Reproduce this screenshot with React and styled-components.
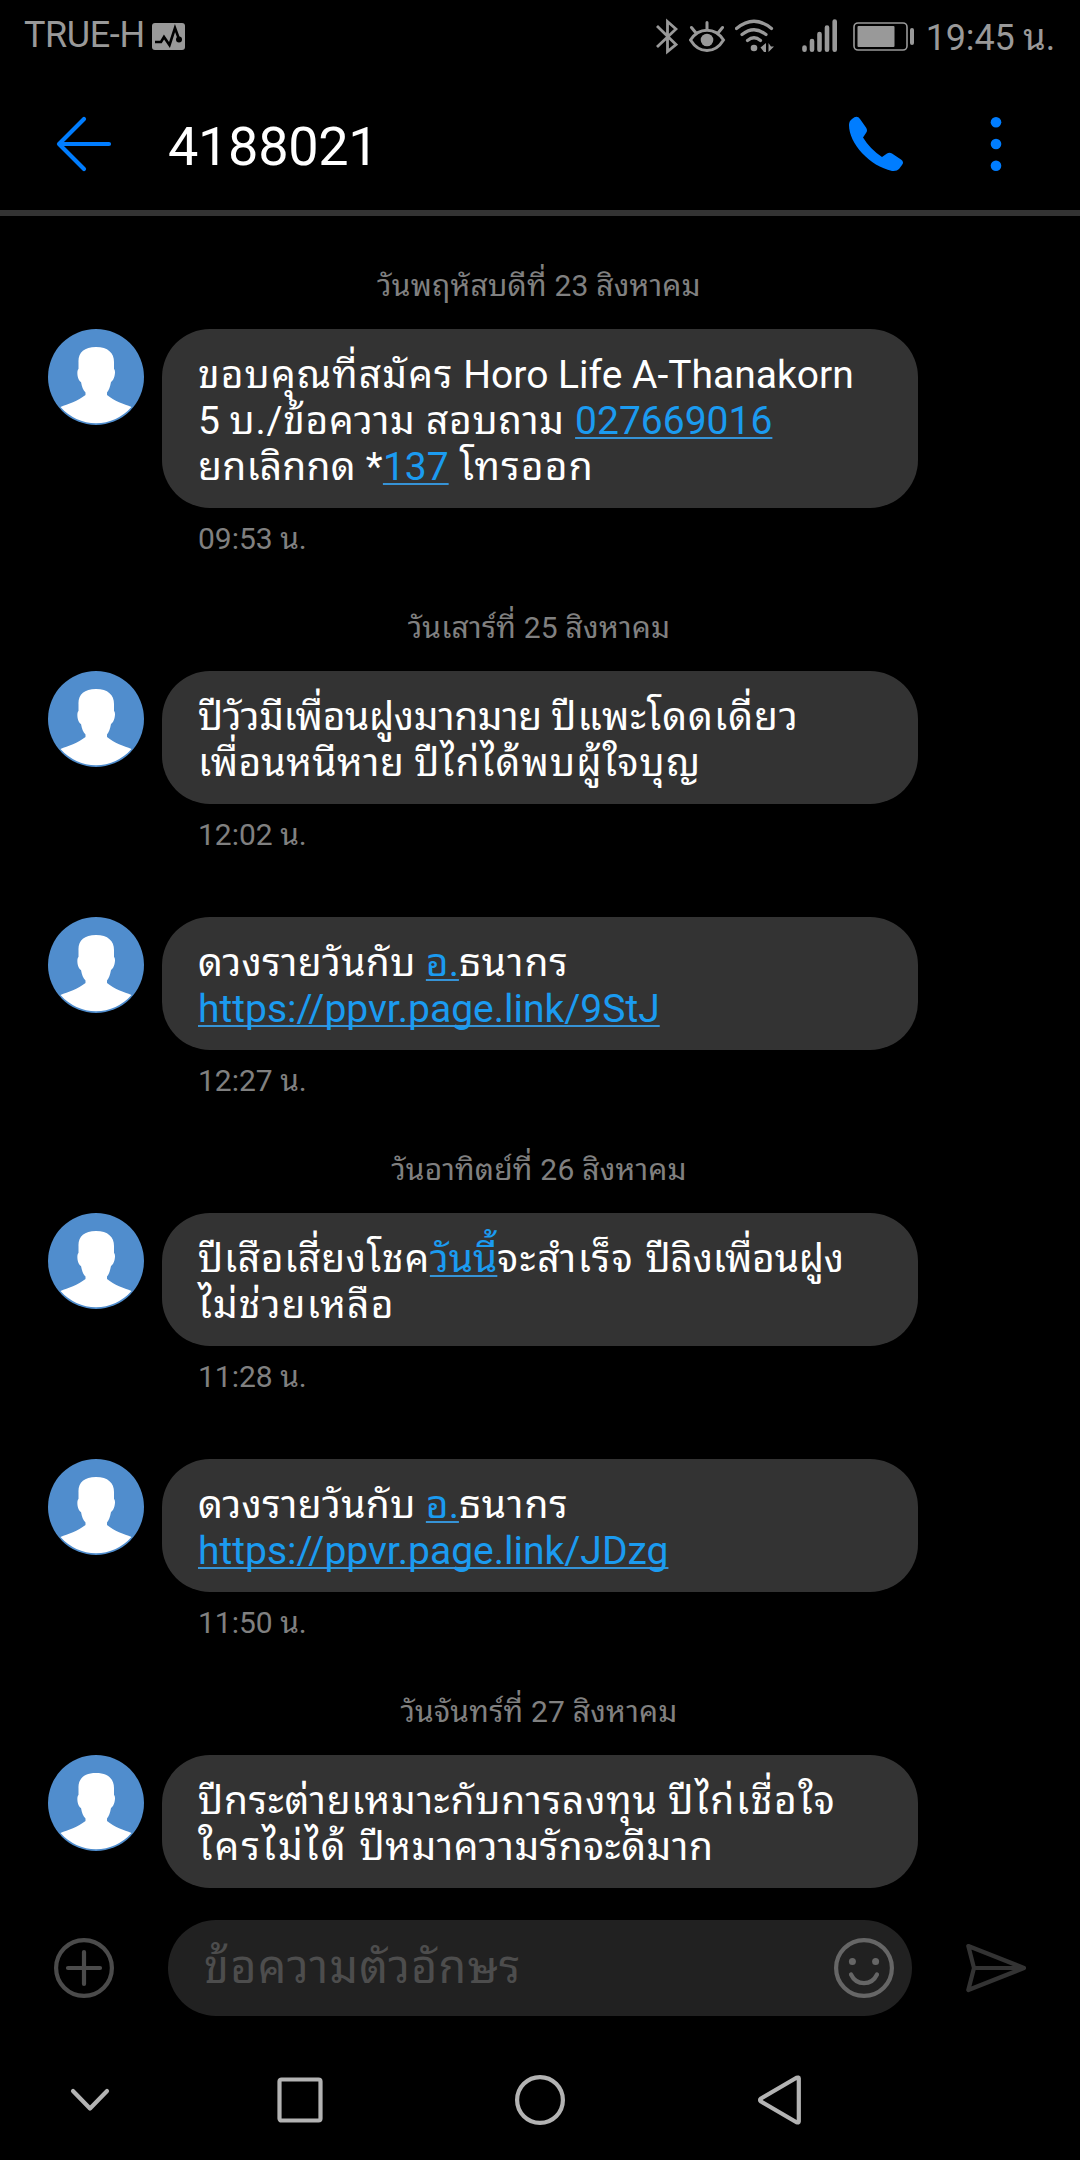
import styled, { createGlobalStyle } from "styled-components";

const GlobalStyle = createGlobalStyle`
  * {
    box-sizing: border-box;
  }
  body {
    margin: 0;
    background: #000;
  }
`;

const Screen = styled.div`
  width: 1080px;
  height: 2160px;
  overflow: hidden;
  display: flex;
  flex-direction: column;
  background: #000;
  color: #fff;
  font-family: Roboto, "Noto Sans Thai Looped", "Noto Sans Thai", sans-serif;
`;

const StatusBar = styled.div`
  height: 72px;
  flex: none;
  display: flex;
  justify-content: space-between;
  padding: 0 25px 0 24px;
  color: #999;
  font-size: 36px;
  line-height: 42px;
`;

const Carrier = styled.div`
  display: flex;
  padding-top: 14px;
  letter-spacing: -0.4px;
`;

const Badge = styled.svg`
  margin: 9px 0 0 7px;
`;

const StatusIcons = styled.div`
  display: flex;
  align-items: flex-start;
`;

const StatusIcon = styled.svg`
  flex: none;
  margin-right: ${(props) => props.$gap}px;
`;

const Clock = styled.span`
  padding-top: 17px;
  letter-spacing: -0.15px;
  white-space: nowrap;
`;

const Header = styled.div`
  height: 144px;
  flex: none;
  display: flex;
  align-items: center;
  padding: 6px 54px 0;
  border-bottom: 6px solid #333;
  color: #007dff;
`;

const Title = styled.h1`
  flex: 1;
  margin: 4px 0 0 54px;
  color: #fff;
  font-size: 54px;
  font-weight: 400;
  letter-spacing: -0.3px;
`;

const Phone = styled.svg`
  margin-right: 60px;
`;

const Messages = styled.div`
  flex: 1;
  min-height: 0;
  overflow: hidden;
  padding: 53px 48px 0;
`;

const Entry = styled.div`
  padding-top: ${(props) => (props.$dated ? 0 : 10)}px;
`;

const DateLabel = styled.div`
  height: 60px;
  padding-right: 2px;
  color: #808080;
  font-size: 30px;
  line-height: 34px;
  letter-spacing: 0.22px;
  text-align: center;
  white-space: nowrap;
`;

const Message = styled.div`
  display: flex;
  align-items: flex-start;
  gap: 18px;
`;

const Body = styled.div`
  width: 756px;
`;

const Bubble = styled.div`
  border-radius: 48px;
  background: #333;
  padding: 23px 36px 18px;
  font-size: 39px;
  line-height: 46px;
`;

const Line = styled.div`
  height: 46px;
  white-space: pre;
`;

const Text = styled.span`
  letter-spacing: ${(props) => props.$track || 0}px;
`;

const Link = styled.a`
  color: #1b9bf0;
  text-decoration: underline #3693d6;
  text-decoration-thickness: 2px;
  text-decoration-skip-ink: none;
  text-underline-offset: 3px;
`;

const Time = styled.div`
  height: 103px;
  padding: 14px 36px 0;
  color: #808080;
  font-size: 30px;
  line-height: 34px;
`;

const Composer = styled.div`
  flex: none;
  height: 96px;
  display: flex;
  align-items: center;
  padding: 0 52px 0 54px;
`;

const Input = styled.div`
  flex: none;
  width: 744px;
  height: 96px;
  margin: 0 54px;
  padding: 0 18px 0 36px;
  border-radius: 48px;
  background: #212121;
  display: flex;
  align-items: center;
  justify-content: space-between;
`;

const Placeholder = styled.span`
  color: #4d4d4d;
  font-size: 45px;
  line-height: 50px;
  letter-spacing: 1.2px;
`;

const NavBar = styled.div`
  flex: none;
  height: 144px;
  display: flex;
  align-items: center;
  padding: 24px 0 0 60px;
`;

const NavIcon = styled.svg`
  width: 60px;
  height: 60px;
  fill: none;
  stroke: #b3b3b3;
  stroke-width: 4.2;
  stroke-linecap: round;
  stroke-linejoin: round;
  margin-right: ${(props) => props.$gap}px;
`;

const Avatar = () => (
  <svg width="96" height="96" viewBox="0 0 96 96">
    <circle cx="48" cy="48" r="48" fill="#508dcd" />
    <path
      fill="#fff"
      d="M48 18C36 18 30 24 30.500 33V40C28.500 41 29 51 33 53C34 58 35 61 37.500 63.500V66C30 72 20 75 12.500 78A47 47 0 0 0 83.500 78C76 75 66 72 59 66V63.500C61 61 62 58 63 53C67 51 68 41 66 40V33C66 24 60 18 48 18Z"
    />
  </svg>
);

// track is the letter spacing of a run of text, in px
const messages = [
  {
    date: "วันพฤหัสบดีที่ 23 สิงหาคม",
    lines: [
      [{ text: "ขอบคุณที่สมัคร", track: 1.1 }, { text: " Horo Life A-Thanakorn" }],
      [{ text: "5 " }, { text: "บ./ข้อความ สอบถาม ", track: 0.68 }, { text: "027669016", url: true }],
      [{ text: "ยกเลิกกด *", track: 0.22 }, { text: "137", url: true }, { text: " โทรออก", track: 1.2 }],
    ],
    time: "09:53 น.",
  },
  {
    date: "วันเสาร์ที่ 25 สิงหาคม",
    lines: [
      [{ text: "ปีวัวมีเพื่อนฝูงมากมาย ", track: -0.36 }, { text: "ปีแพะโดดเดี่ยว", track: 1 }],
      [{ text: "เพื่อนหนีหาย ", track: 0.35 }, { text: "ปีไก่ได้พบผู้ใจบุญ", track: 1.1 }],
    ],
    time: "12:02 น.",
  },
  {
    lines: [
      [{ text: "ดวงรายวันกับ ", track: 0.37 }, { text: "อ.", url: true }, { text: "ธนากร", track: 0.9 }],
      [{ text: "https://ppvr.page.link/9StJ", url: true }],
    ],
    time: "12:27 น.",
  },
  {
    date: "วันอาทิตย์ที่ 26 สิงหาคม",
    lines: [
      [
        { text: "ปีเสือเสี่ยงโชค", track: 0.7 },
        { text: "วันนี้", url: true },
        { text: "จะสำเร็จ ", track: 1.6 },
        { text: "ปีลิงเพื่อนฝูง", track: -0.2 },
      ],
      [{ text: "ไม่ช่วยเหลือ", track: 1.15 }],
    ],
    time: "11:28 น.",
  },
  {
    lines: [
      [{ text: "ดวงรายวันกับ ", track: 0.37 }, { text: "อ.", url: true }, { text: "ธนากร", track: 0.9 }],
      [{ text: "https://ppvr.page.link/JDzg", url: true }],
    ],
    time: "11:50 น.",
  },
  {
    date: "วันจันทร์ที่ 27 สิงหาคม",
    lines: [
      [{ text: "ปีกระต่ายเหมาะกับการลงทุน ", track: 0.8 }, { text: "ปีไก่เชื่อใจ", track: 1.6 }],
      [{ text: "ใครไม่ได้ ", track: 2.1 }, { text: "ปีหมาความรักจะดีมาก", track: 0.55 }],
    ],
  },
];

const App = () => {
  return (
    <Screen>
      <GlobalStyle />
      <StatusBar>
        <Carrier>
          TRUE-H
          <Badge width="33" height="27" viewBox="0 0 33 27">
            <rect width="33" height="27" rx="3" fill="#999" />
            <path d="M3 19H9L12 14L17.500 22L23 5L27 16" fill="none" stroke="#000" strokeWidth="2.6" />
            <circle cx="27" cy="16.500" r="3" fill="#000" />
          </Badge>
        </Carrier>
        <StatusIcons>
          <StatusIcon $gap={11} width="22" height="60" viewBox="657 0 22 60" fill="none" stroke="#999" strokeWidth="2.800">
            <path d="M658 26L677 44.500L668.500 51.500V21.500L677 29L658 47" />
          </StatusIcon>
          <StatusIcon $gap={9} width="37" height="60" viewBox="690 0 37 60" fill="none" stroke="#999" strokeWidth="3" strokeLinecap="round">
            <path d="M691.500 40C700 27 716 27 724.500 40C716 54 700 54 691.500 40ZM708 22.500V29M692.500 27.500L697 33M723.500 27.500L719 33" />
            <circle cx="708" cy="40" r="6.300" fill="#999" stroke="none" />
          </StatusIcon>
          <StatusIcon $gap={27} width="40" height="60" viewBox="736 0 40 60" fill="none" stroke="#999" strokeWidth="3.200" strokeLinecap="round">
            <path d="M737.500 28.500Q755 14 772.500 28.500M743 34.500Q755 25 767 34.500M748.500 40.500Q755 35 761.500 40.500" />
            <circle cx="755" cy="48" r="3.300" fill="#999" stroke="none" />
            <path d="M767 43V52H765L761.500 47.500ZM769.500 43V52L775 46.500H772Z" fill="#999" stroke="none" />
          </StatusIcon>
          <StatusIcon $gap={16} width="35" height="60" viewBox="803 0 35 60" stroke="#999" strokeWidth="4.600" strokeLinecap="round">
            <path d="M805.500 47.500V49.700M813 41V49.700M820.500 34V49.700M828 27.500V49.700M835.700 21.500V49.700" />
          </StatusIcon>
          <StatusIcon $gap={12} width="61" height="60" viewBox="853 0 61 60">
            <rect x="854" y="23" width="53" height="27" rx="4" fill="none" stroke="#999" strokeWidth="1.600" />
            <rect x="857.500" y="26" width="37" height="21" rx="1" fill="#999" />
            <rect x="910" y="28" width="4" height="17" rx="2" fill="#999" />
          </StatusIcon>
          <Clock>19:45 น.</Clock>
        </StatusIcons>
      </StatusBar>
      <Header>
        <svg width="60" height="60" viewBox="54 114 60 60" fill="none" stroke="currentColor" strokeWidth="4.200" strokeLinecap="round" strokeLinejoin="round">
          <path d="M84 119L59 144L84 169M59 144H109" />
        </svg>
        <Title>4188021</Title>
        <Phone width="60" height="60" viewBox="846 114 60 60" fill="currentColor">
          <path d="M852 119Q857 114.500 860 119L866 127.500Q868 130.500 866 133L863 137.500Q870 149 882 157L887 153.500Q889.500 152 892 153.500L901 159.500Q904.500 162 902 165L899 169Q897 171.500 892 171C870 166 849 144 849 125Q849 121 852 119Z" />
        </Phone>
        <svg width="60" height="60" viewBox="966 114 60 60" fill="currentColor">
          <circle cx="996" cy="122.300" r="5.300" />
          <circle cx="996" cy="144" r="5.300" />
          <circle cx="996" cy="165.700" r="5.300" />
        </svg>
      </Header>
      <Messages>
        {messages.map((message, i) => (
          <Entry key={i} $dated={Boolean(message.date)}>
            {message.date && <DateLabel>{message.date}</DateLabel>}
            <Message>
              <Avatar />
              <Body>
                <Bubble>
                  {message.lines.map((line, j) => (
                    <Line key={j}>
                      {line.map((part, k) =>
                        part.url ? (
                          <Link key={k}>{part.text}</Link>
                        ) : (
                          <Text key={k} $track={part.track}>{part.text}</Text>
                        )
                      )}
                    </Line>
                  ))}
                </Bubble>
                {message.time && <Time>{message.time}</Time>}
              </Body>
            </Message>
          </Entry>
        ))}
      </Messages>
      <Composer>
        <svg width="60" height="60" viewBox="0 0 60 60" fill="none" stroke="#4b4b4b" strokeWidth="4.200" strokeLinecap="round">
          <circle cx="30" cy="30" r="27.900" />
          <path d="M30 14V46M14 30H46" />
        </svg>
        <Input>
          <Placeholder>ข้อความตัวอักษร</Placeholder>
          <svg width="60" height="60" viewBox="0 0 60 60" fill="none" stroke="#666" strokeWidth="4.200" strokeLinecap="round">
            <circle cx="30" cy="30" r="27.900" />
            <path d="M17 36.500C22.500 48 37.500 48 43 36.500" />
            <circle cx="18.400" cy="23.600" r="3.500" fill="#666" stroke="none" />
            <circle cx="41.600" cy="23.600" r="3.500" fill="#666" stroke="none" />
          </svg>
        </Input>
        <svg width="60" height="60" viewBox="966 1938 60 60" fill="none" stroke="#333" strokeWidth="4.200" strokeLinejoin="round">
          <path d="M968.300 1946L1024 1968L968.300 1990L974 1968ZM974 1968H1024" />
        </svg>
      </Composer>
      <NavBar>
        <NavIcon $gap={150} viewBox="0 0 60 60">
          <path d="M13 21L30 38.500L47 21" />
        </NavIcon>
        <NavIcon $gap={180} viewBox="0 0 60 60">
          <rect x="9.500" y="9.500" width="41" height="41" rx="2" />
        </NavIcon>
        <NavIcon $gap={180} viewBox="0 0 60 60">
          <circle cx="30" cy="30" r="22.900" />
        </NavIcon>
        <NavIcon $gap={0} viewBox="0 0 60 60">
          <path d="M48.800 8.500V51.500Q48.800 53 46.500 52.300L11 31.500Q9 30 11 28.500L46.500 7.700Q48.800 7 48.800 8.500Z" />
        </NavIcon>
      </NavBar>
    </Screen>
  );
};

export default App;
